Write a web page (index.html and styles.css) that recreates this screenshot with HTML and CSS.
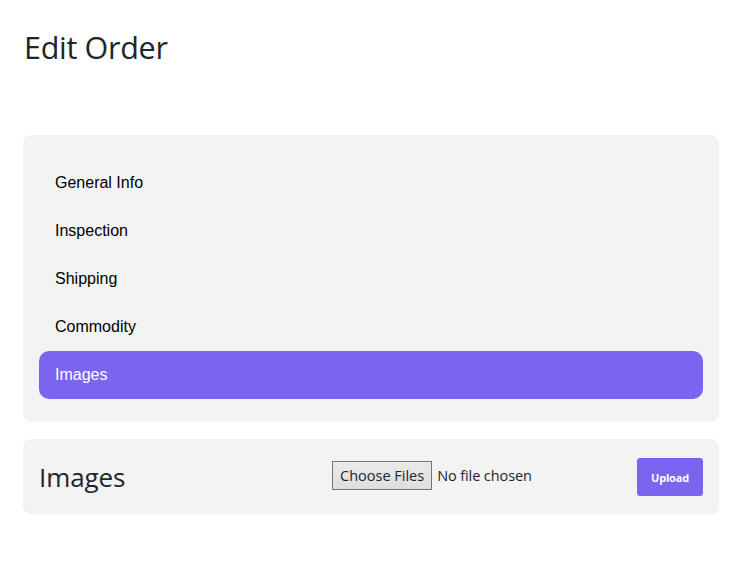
FILE: index.html
```html
<!DOCTYPE html>
<html lang="en">
<head>
<meta charset="utf-8">
<title>Edit Order</title>
<link rel="stylesheet" href="styles.css">
</head>
<body>
<main class="page">
  <h1 class="page-title">Edit Order</h1>
  <nav class="card tabs">
    <a class="tab" href="#">General Info</a>
    <a class="tab" href="#">Inspection</a>
    <a class="tab" href="#">Shipping</a>
    <a class="tab" href="#">Commodity</a>
    <a class="tab active" href="#">Images</a>
  </nav>
  <section class="card images">
    <h2 class="section-title">Images</h2>
    <input class="file-input" type="file" multiple>
    <button class="upload" type="button">Upload</button>
  </section>
</main>
</body>
</html>
```
FILE: styles.css
```css
* { box-sizing: border-box; }
body {
  margin: 0;
  background: #ffffff;
  font-family: "Open Sans", sans-serif;
  color: #212529;
}
.page {
  padding: 24px 25px 0 23px;
}
.page-title {
  margin: 0 0 65px 1px;
  font-size: 30.5px;
  font-weight: 400;
  line-height: 46px;
  letter-spacing: -0.3px;
  color: #212529;
}
.card {
  background: #f3f3f3;
  border-radius: 8px;
}
.tabs {
  display: flex;
  flex-direction: column;
  padding: 24px 16px 23px;
}
.tab {
  display: block;
  height: 48px;
  line-height: 48px;
  padding: 0 16px;
  font-family: "Liberation Sans", Arial, sans-serif;
  font-size: 16px;
  color: #000000;
  text-decoration: none;
  border-radius: 10px;
}
.tab.active {
  background: #7b64f0;
  color: #ffffff;
}
.images {
  margin-top: 17px;
  display: flex;
  align-items: center;
  padding: 19px 16px 18px;
}
.section-title {
  flex: 1;
  margin: 0;
  font-size: 26px;
  font-weight: 400;
  line-height: 38px;
  letter-spacing: -0.1px;
  color: #212529;
}
.file-input {
  width: 250px;
  margin: 0 55px 3px 0;
  font-family: "Open Sans", sans-serif;
  font-size: 14.5px;
  color: #212529;
  letter-spacing: -0.1px;
}
.file-input::file-selector-button {
  height: 29px;
  margin: 0 5px 0 0;
  padding: 0 7px;
  font: inherit;
  color: #212529;
  border: 1px solid #767676;
  border-radius: 0;
  background: linear-gradient(#eaeaea, #dedede);
}
.upload {
  width: 66px;
  height: 38px;
  border: none;
  border-radius: 3px;
  background: #7b64f0;
  color: #ffffff;
  font-family: "Open Sans", sans-serif;
  font-size: 11px;
  font-weight: 700;
  letter-spacing: -0.2px;
  padding: 0;
}
```
